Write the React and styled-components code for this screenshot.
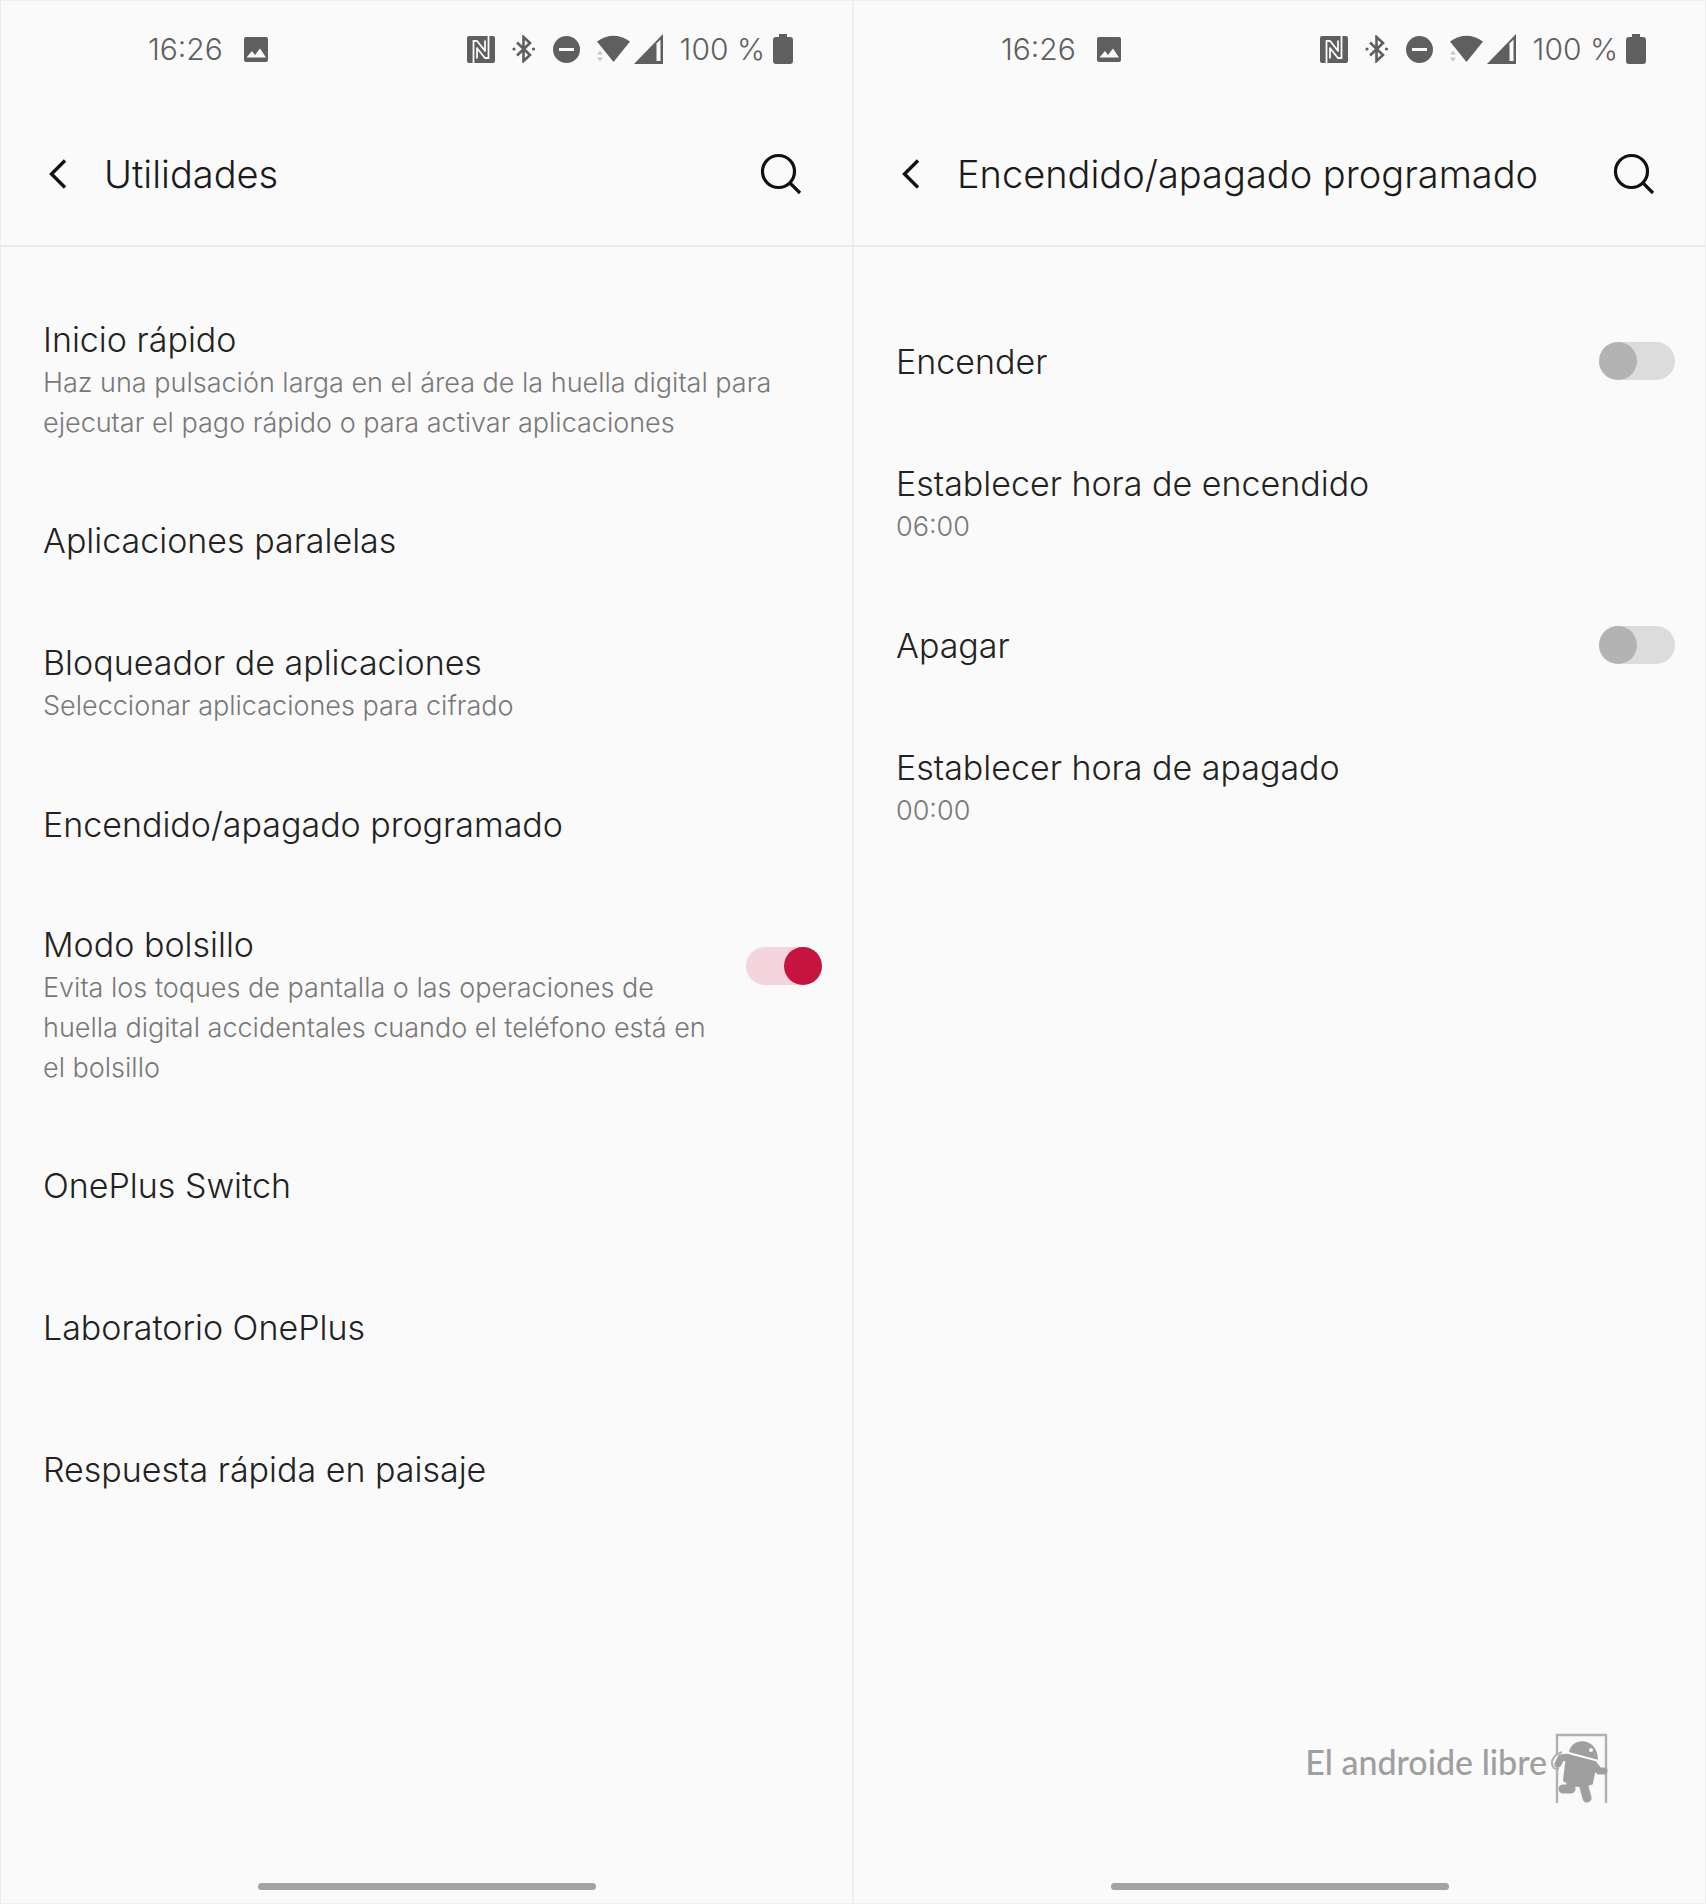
import React, { useState } from "react";
import styled, { createGlobalStyle } from "styled-components";

const GlobalStyle = createGlobalStyle`
  * {
    box-sizing: border-box;
  }

  body {
    margin: 0;
    background: #fafafa;
    font-family: Inter, "Liberation Sans", sans-serif;
    font-weight: 300;
  }
`;

const StyledScreens = styled.div`
  display: grid;
  grid-template-columns: 1fr 1fr;
  min-height: 100vh;
`;

const StyledPhone = styled.main`
  display: flex;
  flex-direction: column;
  background: #fafafa;
  box-shadow: inset 0 0 0 1px #eeeeee;
`;

const StyledStatusBar = styled.div`
  display: flex;
  align-items: center;
  justify-content: space-between;
  height: 98px;
  padding: 0 60px 0 148px;
  color: #5f5f5f;
  font-size: 30px;

  svg {
    display: block;
  }
`;

const StyledStatusGroup = styled.div`
  display: flex;
  align-items: center;
  gap: ${(props) => props.$gap}px;
`;

const StyledHeader = styled.header`
  display: flex;
  align-items: center;
  height: 149px;
  padding: 4px 42px 0 36px;
  border-bottom: 2px solid #ebebeb;
  color: #1b1b1b;

  h1 {
    flex: 1;
    margin: 0 0 0 24px;
    font-size: 38px;
    font-weight: 300;
    line-height: 48px;
  }
`;

const StyledIconButton = styled.button`
  display: grid;
  place-items: center;
  width: ${(props) => props.$width}px;
  height: 60px;
  padding: 0;
  border: 0;
  background: none;
  color: #111;
  cursor: pointer;
`;

const StyledList = styled.ul`
  flex: 1;
  margin: 0;
  padding: 43px 0 0;
  list-style: none;
`;

const StyledRow = styled.div`
  display: flex;
  align-items: flex-start;
  gap: 24px;
  padding: 0 31px 0 43px;
`;

const StyledText = styled.div`
  display: flex;
  flex: 1;
  flex-direction: column;
  justify-content: center;
  min-height: 142px;
  padding: 27px 0 26px;
  color: #222;
  font-size: 34px;
  line-height: 46px;
  text-decoration: none;
`;

const StyledSummary = styled.span`
  color: #787878;
  font-size: 27px;
  line-height: 40px;
`;

const StyledSwitch = styled.input`
  flex: none;
  width: 76px;
  height: 38px;
  margin: 52px 0;
  border-radius: 19px;
  appearance: none;
  background: #dcdcdc;
  cursor: pointer;

  &::before {
    content: "";
    display: block;
    width: 38px;
    height: 38px;
    border-radius: 50%;
    background: #b3b3b3;
  }

  &:checked {
    background: #f4d5de;
  }

  &:checked::before {
    margin-left: auto;
    background: #c51440;
  }
`;

const StyledWatermark = styled.div`
  display: flex;
  align-items: flex-start;
  align-self: flex-end;
  gap: 3px;
  margin: 0 98px 80px 0;
  color: #9f9f9f;
  font-family: Lato, sans-serif;
  font-size: 34px;
  font-weight: 500;
  line-height: 58px;
`;

const StyledHomeBar = styled.div`
  width: 338px;
  height: 7px;
  margin: 0 auto 14px;
  border-radius: 4px;
  background: #a3a3a3;
`;

function PictureIcon() {
  return (
    <svg width="24" height="25" viewBox="0 0 24 25">
      <rect width="24" height="25" rx="2" fill="currentColor" />
      <path d="M2.500 20.500 8 14l3 4 5-6.500 6 9z" fill="#fafafa" />
    </svg>
  );
}

function NfcIcon() {
  return (
    <svg width="28" height="27" viewBox="0 0 28 27">
      <rect width="28" height="27" rx="2" fill="currentColor" />
      <path
        d="M6.500 27V5H10L18.500 15.500M10 11.500V22.500M21.500 0V22H18L9.500 11.500M18 4.500v11"
        fill="none"
        stroke="#fafafa"
        strokeWidth="1.800"
      />
    </svg>
  );
}

function BluetoothIcon() {
  return (
    <svg width="24" height="28" viewBox="0 0 24 28">
      <path
        d="M5 7.500 18 20l-6.500 6V2L18 8 5 20.500"
        fill="none"
        stroke="currentColor"
        strokeWidth="2.600"
      />
      <circle cx="2" cy="14" r="1.600" fill="currentColor" />
      <circle cx="21.500" cy="14" r="1.600" fill="currentColor" />
    </svg>
  );
}

function DoNotDisturbIcon() {
  return (
    <svg width="27" height="27" viewBox="0 0 27 27">
      <circle cx="13.500" cy="13.500" r="13.500" fill="currentColor" />
      <path d="M6 13.500h15" stroke="#fafafa" strokeWidth="3" />
    </svg>
  );
}

function WifiIcon() {
  return (
    <svg width="33" height="28" viewBox="0 0 33 28">
      <path d="M0 6.500Q16.500-5 33 6.500L16.500 27z" fill="currentColor" />
      <path d="m0 19.500 3-4 3 4zM0 22.500h6l-3 4z" fill="#c9c9c9" />
    </svg>
  );
}

function SignalIcon() {
  return (
    <svg width="29" height="30" viewBox="0 0 29 30">
      <path d="M29 0v30H0z" fill="currentColor" />
      <path d="M22.500 9.500 26.500 5.500v21.500h-4z" fill="#fafafa" />
    </svg>
  );
}

function BatteryIcon() {
  return (
    <svg width="20" height="30" viewBox="0 0 20 30">
      <path
        d="M6 0h8v3h3a3 3 0 0 1 3 3v21a3 3 0 0 1-3 3H3a3 3 0 0 1-3-3V6a3 3 0 0 1 3-3h3z"
        fill="currentColor"
      />
    </svg>
  );
}

function BackIcon() {
  return (
    <svg width="20" height="32" viewBox="0 0 20 32">
      <path d="M17 2.500 3.500 16 17 29.500" fill="none" stroke="currentColor" strokeWidth="3.400" />
    </svg>
  );
}

function SearchIcon() {
  return (
    <svg width="42" height="42" viewBox="0 0 42 42">
      <g fill="none" stroke="currentColor" strokeWidth="3.200">
        <circle cx="18.500" cy="18.500" r="16" />
        <path d="M29.500 29.500 40 40" />
      </g>
    </svg>
  );
}

function AndroidLogo() {
  return (
    <svg width="58" height="70" viewBox="0 0 58 70">
      <path d="M7 21V2h49v68M7 36v34" fill="none" stroke="#b0b0b0" strokeWidth="2.400" />
      <path d="M12 19 6 22Q-1 29 4 35l5 1" fill="none" stroke="#b0b0b0" strokeWidth="2" />
      <path d="M19 19C22 3 48 4 48 27z" fill="currentColor" />
      <g stroke="currentColor" strokeLinecap="round" strokeLinejoin="round">
        <path d="M18 23 45 30 41 50Q28 55 15 47z" fill="currentColor" strokeWidth="4" />
        <path d="M18 24 11 25 8 31M45 33l4 5h5" fill="none" strokeWidth="7" />
        <path d="M21 48v8h-8M33 50l4 15" fill="none" strokeWidth="9" />
      </g>
      <path d="M16 19.500 49 28" stroke="#fafafa" strokeWidth="1.500" />
      <circle cx="41" cy="17" r="2" fill="#fafafa" />
    </svg>
  );
}

function StatusBar() {
  return (
    <StyledStatusBar>
      <StyledStatusGroup $gap={21}>
        <span>16:26</span>
        <PictureIcon />
      </StyledStatusGroup>
      <StyledStatusGroup $gap={17}>
        <NfcIcon />
        <BluetoothIcon />
        <DoNotDisturbIcon />
        <StyledStatusGroup $gap={4}>
          <WifiIcon />
          <SignalIcon />
        </StyledStatusGroup>
        <StyledStatusGroup $gap={8}>
          <span>100 %</span>
          <BatteryIcon />
        </StyledStatusGroup>
      </StyledStatusGroup>
    </StyledStatusBar>
  );
}

function SwitchItem({ id, title, summary, defaultOn = false }) {
  const [on, setOn] = useState(defaultOn);

  return (
    <li>
      <StyledRow>
        <StyledText as="label" htmlFor={id}>
          {title}
          {summary && <StyledSummary>{summary}</StyledSummary>}
        </StyledText>
        <StyledSwitch
          id={id}
          type="checkbox"
          role="switch"
          checked={on}
          onChange={() => setOn(!on)}
        />
      </StyledRow>
    </li>
  );
}

function LinkItem({ title, summary }) {
  return (
    <li>
      <StyledRow>
        <StyledText as="a" href="#">
          {title}
          {summary && <StyledSummary>{summary}</StyledSummary>}
        </StyledText>
      </StyledRow>
    </li>
  );
}

function Phone({ title, items, watermark }) {
  return (
    <StyledPhone>
      <StatusBar />
      <StyledHeader>
        <StyledIconButton $width={44} aria-label="Atrás">
          <BackIcon />
        </StyledIconButton>
        <h1>{title}</h1>
        <StyledIconButton $width={60} aria-label="Buscar">
          <SearchIcon />
        </StyledIconButton>
      </StyledHeader>
      <StyledList>
        {items.map((item) =>
          item.id ? (
            <SwitchItem key={item.title} {...item} />
          ) : (
            <LinkItem key={item.title} {...item} />
          )
        )}
      </StyledList>
      {watermark && (
        <StyledWatermark>
          <span>{watermark}</span>
          <AndroidLogo />
        </StyledWatermark>
      )}
      <StyledHomeBar />
    </StyledPhone>
  );
}

const utilities = [
  {
    title: "Inicio rápido",
    summary:
      "Haz una pulsación larga en el área de la huella digital para ejecutar el pago rápido o para activar aplicaciones",
  },
  { title: "Aplicaciones paralelas" },
  {
    title: "Bloqueador de aplicaciones",
    summary: "Seleccionar aplicaciones para cifrado",
  },
  { title: "Encendido/apagado programado" },
  {
    id: "pocket-mode",
    title: "Modo bolsillo",
    summary:
      "Evita los toques de pantalla o las operaciones de huella digital accidentales cuando el teléfono está en el bolsillo",
    defaultOn: true,
  },
  { title: "OnePlus Switch" },
  { title: "Laboratorio OnePlus" },
  { title: "Respuesta rápida en paisaje" },
];

const schedule = [
  { id: "power-on", title: "Encender" },
  { title: "Establecer hora de encendido", summary: "06:00" },
  { id: "power-off", title: "Apagar" },
  { title: "Establecer hora de apagado", summary: "00:00" },
];

export default function App() {
  return (
    <>
      <GlobalStyle />
      <StyledScreens>
        <Phone title="Utilidades" items={utilities} />
        <Phone
          title="Encendido/apagado programado"
          items={schedule}
          watermark="El androide libre"
        />
      </StyledScreens>
    </>
  );
}
